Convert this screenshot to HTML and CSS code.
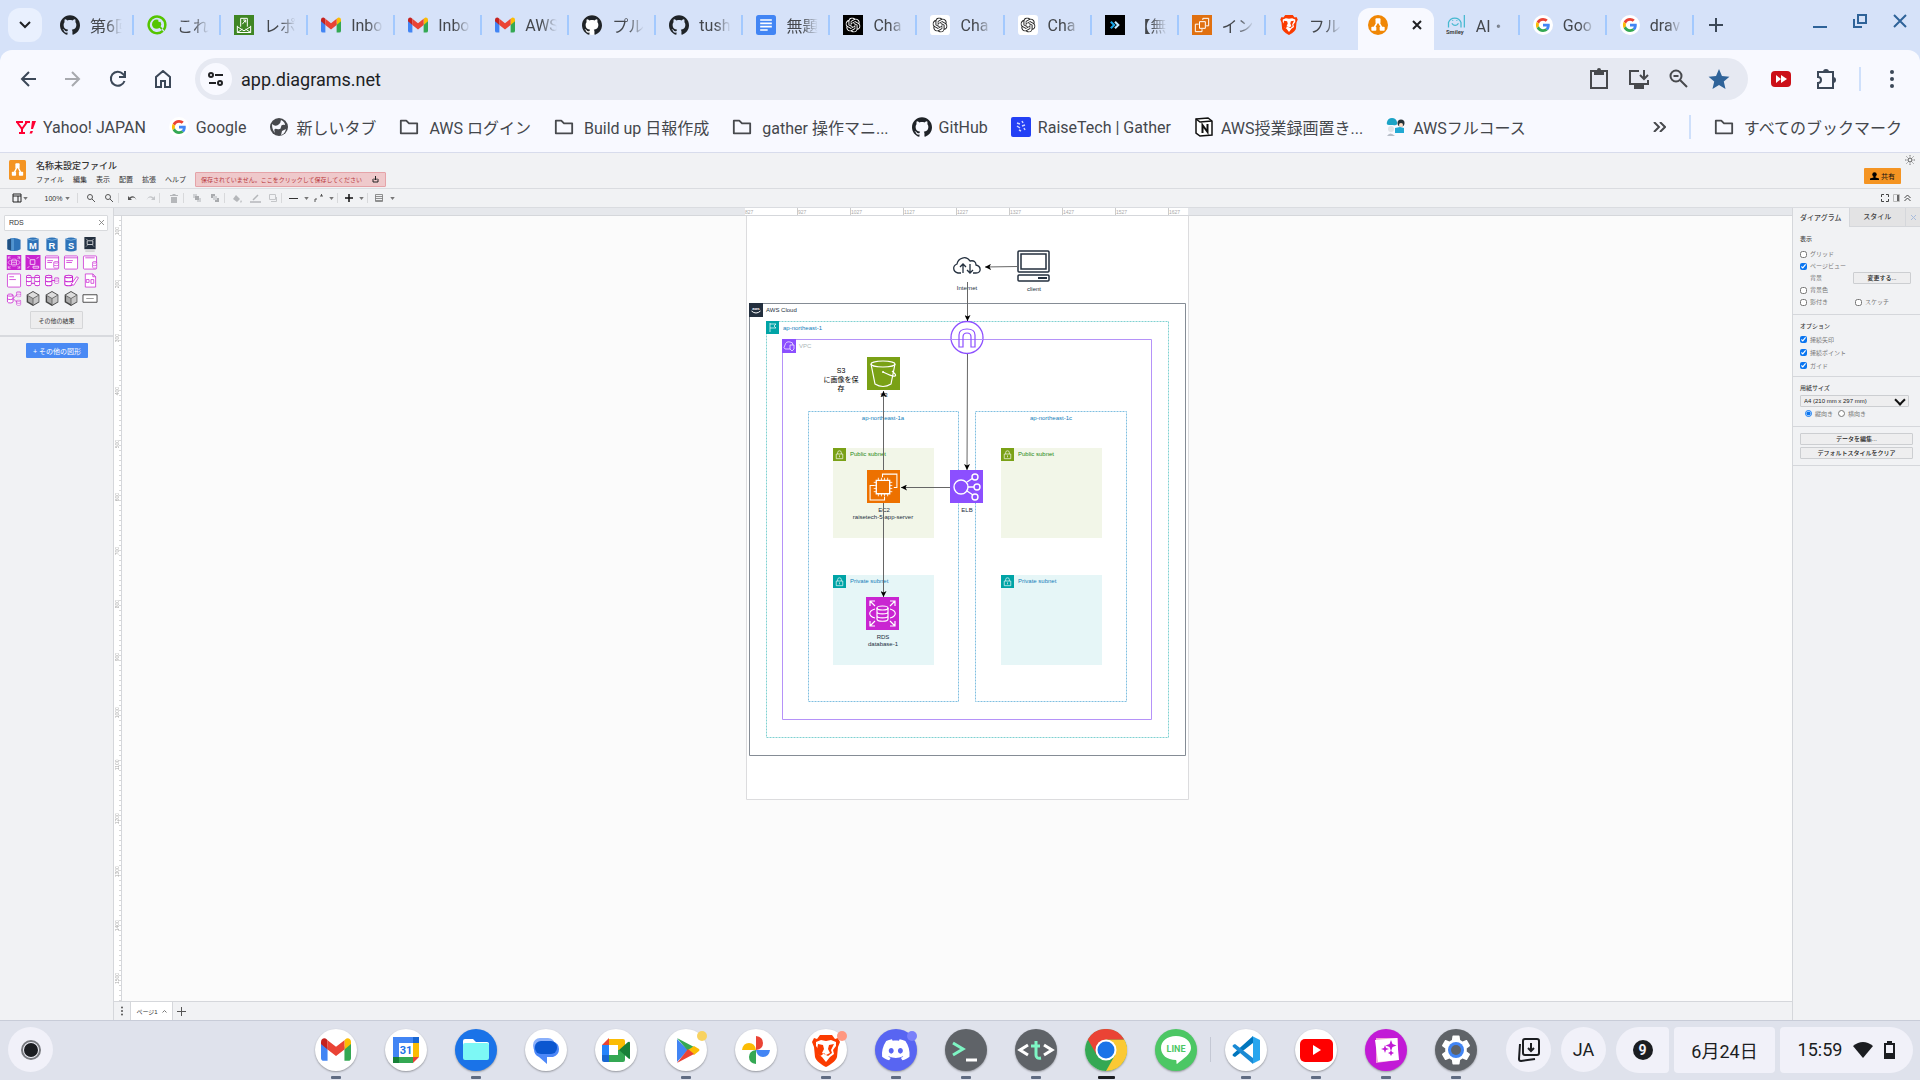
FILE: index.html
```html
<!DOCTYPE html>
<html lang="ja">
<head>
<meta charset="utf-8">
<meta name="viewport" content="width=device-width, initial-scale=1">
<title>名称未設定ファイル</title>
<link rel="stylesheet" href="styles.css">
</head>
<body>
<svg class="defs" aria-hidden="true">
  <symbol id="github" viewBox="0 0 24 24"><path d="M12 .297c-6.63 0-12 5.373-12 12 0 5.303 3.438 9.8 8.205 11.385.6.113.82-.258.82-.577 0-.285-.01-1.04-.015-2.04-3.338.724-4.042-1.61-4.042-1.61C4.422 18.07 3.633 17.7 3.633 17.7c-1.087-.744.084-.729.084-.729 1.205.084 1.838 1.236 1.838 1.236 1.07 1.835 2.809 1.305 3.495.998.108-.776.417-1.305.76-1.605-2.665-.3-5.466-1.332-5.466-5.93 0-1.31.465-2.38 1.235-3.22-.135-.303-.54-1.523.105-3.176 0 0 1.005-.322 3.3 1.23.96-.267 1.98-.399 3-.405 1.02.006 2.04.138 3 .405 2.28-1.552 3.285-1.23 3.285-1.23.645 1.653.24 2.873.12 3.176.765.84 1.23 1.91 1.23 3.22 0 4.61-2.805 5.625-5.475 5.92.42.36.81 1.096.81 2.22 0 1.606-.015 2.896-.015 3.286 0 .315.21.69.825.57C20.565 22.092 24 17.592 24 12.297c0-6.627-5.373-12-12-12" fill="#1f2328"/></symbol>
  <symbol id="github-white" viewBox="0 0 24 24"><circle cx="12" cy="12" r="12" fill="#fff"/><use href="#github"/></symbol>
  <symbol id="google" viewBox="-10 -10 68 68"><circle cx="24" cy="24" r="34" fill="#fff"/><path fill="#ea4335" d="M24 9.5c3.54 0 6.71 1.22 9.21 3.6l6.85-6.85C35.9 2.38 30.47 0 24 0 14.62 0 6.51 5.38 2.56 13.22l7.98 6.19C12.43 13.72 17.74 9.5 24 9.5z"/><path fill="#4285f4" d="M46.98 24.55c0-1.57-.15-3.09-.38-4.55H24v9.02h12.94c-.58 2.96-2.26 5.48-4.78 7.18l7.73 6c4.51-4.18 7.09-10.36 7.09-17.65z"/><path fill="#fbbc05" d="M10.53 28.59c-.48-1.45-.76-2.99-.76-4.59s.27-3.14.76-4.59l-7.98-6.19C.92 16.46 0 20.12 0 24c0 3.88.92 7.54 2.56 10.78l7.97-6.19z"/><path fill="#34a853" d="M24 48c6.48 0 11.93-2.13 15.89-5.81l-7.73-6c-2.15 1.45-4.92 2.3-8.16 2.3-6.26 0-11.57-4.22-13.47-9.91l-7.98 6.19C6.51 42.62 14.62 48 24 48z"/></symbol>
  <symbol id="gmail" viewBox="0 0 32 24"><path d="M0 4v17q0 3 3 3h4V9z" fill="#4285f4"/><path d="M32 4v17q0 3-3 3h-4V9z" fill="#34a853"/><path d="M25 2v10l7-6V4c0-4-4-5-6-3z" fill="#fbbc04"/><path d="M7 2v10L0 6V4c0-4 4-5 6-3z" fill="#c5221f"/><path d="m7 2 9 7 9-7v10l-9 7-9-7z" fill="#ea4335"/></symbol>
  <symbol id="qiita" viewBox="0 0 24 24"><path d="M19 19A10 10 0 1 1 22 12q0 4-2 6" fill="none" stroke="#55c500" stroke-width="3"/><circle cx="11.500" cy="11" r="5.500" fill="#55c500"/><circle cx="15" cy="7" r="1.500" fill="#d6e2f9"/><path d="m15 14 3 3" stroke="#55c500" stroke-width="2"/></symbol>
  <symbol id="ses" viewBox="0 0 24 24"><path fill="#3f8624" d="M0 0h24v24H0z"/><path d="M4 13v8h16v-8M4 14l8 5 8-5M4 21l6-4m10 4-6-4M8 14V4h8v10M10 11l4-5m-3 0h3v3" fill="none" stroke="#fff" stroke-width="1.200"/></symbol>
  <symbol id="docs" viewBox="0 0 24 24"><rect width="24" height="24" rx="3" fill="#4285f4"/><path d="M5 6h14M5 10h14M5 14h14M5 18h9" stroke="#fff" stroke-width="2"/></symbol>
  <symbol id="knot" viewBox="0 0 24 24"><path fill="currentColor" d="M22.2819 9.8211a5.9847 5.9847 0 0 0-.5157-4.9108 6.0462 6.0462 0 0 0-6.5098-2.9A6.0651 6.0651 0 0 0 4.9807 4.1818a5.9847 5.9847 0 0 0-3.9977 2.9 6.0462 6.0462 0 0 0 .7427 7.0966 5.98 5.98 0 0 0 .511 4.9107 6.051 6.051 0 0 0 6.5146 2.9001A5.9847 5.9847 0 0 0 13.2599 24a6.0557 6.0557 0 0 0 5.7718-4.2058 5.9894 5.9894 0 0 0 3.9977-2.9001 6.0557 6.0557 0 0 0-.7475-7.0729zm-9.022 12.6081a4.4755 4.4755 0 0 1-2.8764-1.0408l.1419-.0804 4.7783-2.7582a.7948.7948 0 0 0 .3927-.6813v-6.7369l2.02 1.1686a.071.071 0 0 1 .038.052v5.5826a4.504 4.504 0 0 1-4.4945 4.4944zm-9.6607-4.1254a4.4708 4.4708 0 0 1-.5346-3.0137l.142.0852 4.783 2.7582a.7712.7712 0 0 0 .7806 0l5.8428-3.3685v2.3324a.0804.0804 0 0 1-.0332.0615L9.74 19.9502a4.4992 4.4992 0 0 1-6.1408-1.6464zM2.3408 7.8956a4.485 4.485 0 0 1 2.3655-1.9728V11.6a.7664.7664 0 0 0 .3879.6765l5.8144 3.3543-2.0201 1.1685a.0757.0757 0 0 1-.071 0l-4.8303-2.7865A4.504 4.504 0 0 1 2.3408 7.872zm16.5963 3.8558L13.1038 8.364 15.1192 7.2a.0757.0757 0 0 1 .071 0l4.8303 2.7913a4.4944 4.4944 0 0 1-.6765 8.1042v-5.6772a.79.79 0 0 0-.407-.667zm2.0107-3.0231l-.142-.0852-4.7735-2.7818a.7759.7759 0 0 0-.7854 0L9.409 9.2297V6.8974a.0662.0662 0 0 1 .0284-.0615l4.8303-2.7866a4.4992 4.4992 0 0 1 6.6802 4.66zM8.3065 12.863l-2.02-1.1638a.0804.0804 0 0 1-.038-.0567V6.0742a4.4992 4.4992 0 0 1 7.3757-3.4537l-.142.0805L8.704 5.459a.7948.7948 0 0 0-.3927.6813zm1.0976-2.3654l2.602-1.4998 2.6069 1.4998v2.9994l-2.5974 1.4997-2.6067-1.4997Z"/></symbol>
  <symbol id="chat-dark" viewBox="0 0 24 24"><path d="M0 0h24v24H0z"/><use href="#knot" x="3" y="3" width="18" height="18" color="#fff"/></symbol>
  <symbol id="chat-light" viewBox="0 0 24 24"><rect width="24" height="24" rx="4" fill="#fff"/><use href="#knot" x="3" y="3" width="18" height="18" color="#222"/></symbol>
  <symbol id="chevrons" viewBox="0 0 24 24"><path d="M0 0h24v24H0z"/><path d="m7 8 4 4-4 4" stroke="#18a7e8" stroke-width="2.500" fill="none"/><path d="m12 8 4 4-4 4" stroke="#bfe9ff" stroke-width="2.500" fill="none"/></symbol>
  <symbol id="ec2" viewBox="0 0 32 32"><path fill="#ed7100" d="M0 0h32v32H0z"/><g fill="none" stroke="#fff"><path d="M9 10h13v13H9z" stroke-width="1.300"/><path d="M11 7.500V10m3-2.500V10m3-2.500V10m3-2.500V10M11 23v2.500m3-2.500v2.500m3-2.500v2.500m3-2.500v2.500M6.500 12H9m-2.500 3H9m-2.500 3H9m-2.500 3H9M22 12h2.500M22 15h2.500M22 18h2.500M22 21h2.500" stroke-width=".800"/><path d="M15 7V4h14v13h-3M7 15H3v14h14v-3"/></g></symbol>
  <symbol id="ec2-tab" viewBox="0 0 24 24"><path fill="#e07010" d="M0 0h24v24H0z"/><path d="M9 8h7v8H9zM13 6V4h7v9h-3M8 11H4v9h8v-3" fill="none" stroke="#fff" stroke-width="1.200"/></symbol>
  <symbol id="brave" viewBox="0 0 28 32"><path d="m8 0-3 4-3-1-2 4 2 5 1 10c1 4 7 8 11 10 4-2 10-6 11-10l1-10 2-5-2-4-3 1-3-4z" fill="#fb3b00"/><path d="m4 7 5-2 5 1 5-1 5 2v4l-3 4 1 4-4 3-4 5-4-5-4-3 1-4-3-4z" fill="#fff"/><path d="m6 9 5 1 1 4-2 4 4 2 4-2-2-4 1-4 5-1-3 6 1 3-4 3-2-1-2-2-2 2-2 1-4-3 1-3z" fill="#fb3b00"/><path d="m13 10h2l1 5-1 3h-2l-1-3z" fill="#fff"/></symbol>
  <symbol id="drawio" viewBox="0 0 24 24"><path d="m12 7-5 9m5-9 5 9" stroke="#fff" stroke-width="2"/><rect x="9" y="4" width="6" height="6" rx="1" fill="#fff"/><rect x="4" y="14" width="6" height="5" rx="1" fill="#fff"/><rect x="14" y="14" width="6" height="5" rx="1" fill="#fff"/></symbol>
  <symbol id="drawio-round" viewBox="0 0 24 24"><circle cx="12" cy="12" r="12" fill="#f08705"/><use href="#drawio"/></symbol>
  <symbol id="folder" viewBox="0 0 22 18"><path d="M2 2h6l3 3h9v11H2z" fill="none" stroke="#47494d" stroke-width="2" stroke-linejoin="round"/></symbol>
  <symbol id="caret" viewBox="0 0 6 4"><path d="M0 0h6L3 4z" fill="#777"/></symbol>
  <symbol id="lock" viewBox="0 0 14 14"><path d="M3.500 6.500h7v5h-7zM5 6.500V5a2 2 0 0 1 4 0v1.500M7 8v2" fill="none" stroke="#fff" stroke-width=".700"/></symbol>
  <symbol id="rds" viewBox="0 0 33 33"><path fill="#c925d1" d="M0 0h33v33H0z"/><g fill="none" stroke="#fff" stroke-width="1.200"><ellipse cx="16.500" cy="11" rx="5.500" ry="2"/><path d="M11 11v11c0 3 11 3 11 0V11M11 15c0 2.500 11 2.500 11 0m-11 4c0 2.500 11 2.500 11 0M9 12c-7 2-7 7 0 9m15-9c7 2 7 7 0 9M9 9 4 4m0 5V4h5m15 5 5-5m-5 0h5v5M9 24l-5 5m0-5v5h5m15-5 5 5m-5 0h5v-5"/></g></symbol>
  <symbol id="cube" viewBox="0 0 16 16"><path d="m8 1 6 3.500v7L8 15l-6-3.500v-7z" fill="#a9a9a9" stroke="#444" stroke-width="1.500"/><path d="m8 1 6 3.500L8 8 2 4.500z" fill="#ddd"/><path d="M8 8v7l6-3.500v-7z" fill="#c6c6c6"/><path d="m2 4.500 6 3.500 6-3.500M8 8v7" fill="none" stroke="#555" stroke-width=".800"/></symbol>
  <symbol id="bucket-db" viewBox="0 0 16 16"><path d="M2 2q6-3 12 0v12q-6 3-12 0z" fill="#2e73b8"/><path d="M2 2q6 3 12 0" stroke="#7db0dd" fill="none"/></symbol>
  <symbol id="cyl" viewBox="0 0 8 10" preserveAspectRatio="none"><path d="M1 2c0-1.300 6-1.300 6 0v6c0 1.300-6 1.300-6 0zm0 0c0 1.300 6 1.300 6 0M1 5c0 1.300 6 1.300 6 0" fill="#fff" stroke="#c925d1" stroke-width=".800"/></symbol>
</svg>

<header class="browser">
  <div class="tabstrip">
    <button class="tab-search" aria-label="タブを検索"><svg width="12" height="8" viewBox="0 0 12 8"><path d="m1 1 5 5 5-5" fill="none" stroke="#202124" stroke-width="2"/></svg></button>
    <nav class="tabs">
      <a class="tab" href="#"><svg><use href="#github"/></svg><span>第6回</span></a>
      <a class="tab" href="#"><svg><use href="#qiita"/></svg><span>これ</span></a>
      <a class="tab" href="#"><svg><use href="#ses"/></svg><span>レポ</span></a>
      <a class="tab" href="#"><svg><use href="#gmail"/></svg><span>Inbo</span></a>
      <a class="tab" href="#"><svg><use href="#gmail"/></svg><span>Inbo</span></a>
      <a class="tab" href="#"><svg><use href="#gmail"/></svg><span>AWS</span></a>
      <a class="tab" href="#"><svg><use href="#github-white"/></svg><span>プル</span></a>
      <a class="tab" href="#"><svg><use href="#github"/></svg><span>tush</span></a>
      <a class="tab" href="#"><svg><use href="#docs"/></svg><span>無題</span></a>
      <a class="tab" href="#"><svg><use href="#chat-dark"/></svg><span>Cha</span></a>
      <a class="tab" href="#"><svg><use href="#chat-light"/></svg><span>Cha</span></a>
      <a class="tab" href="#"><svg><use href="#chat-light"/></svg><span>Cha</span></a>
      <a class="tab" href="#"><svg><use href="#chevrons"/></svg><span>【無</span></a>
      <a class="tab" href="#"><svg><use href="#ec2-tab"/></svg><span>イン</span></a>
      <a class="tab plain" href="#"><svg><use href="#brave"/></svg><span>フル</span></a>
      <a class="tab active" href="#" aria-label="draw.io"><svg><use href="#drawio-round"/></svg><svg class="tab-close" viewBox="0 0 10 10"><path d="m1 1 8 8m0-8-8 8" stroke="#202124" stroke-width="2"/></svg></a>
      <a class="tab" href="#"><svg viewBox="0 0 24 24"><path d="M3 15V9a8 8 0 0 1 15 0v6m4-15v15M7 10q4 5 8 0M8 6v1m5-1v1" fill="none" stroke="#45b8d0" stroke-width="1.500"/><text x="0" y="23" font-size="7" font-weight="bold" fill="#444">Smiley</text></svg><span>AI・</span></a>
      <a class="tab" href="#"><svg><use href="#google"/></svg><span>Goo</span></a>
      <a class="tab" href="#"><svg><use href="#google"/></svg><span>drav</span></a>
    </nav>
    <button class="icon-btn new-tab" aria-label="新しいタブ"><svg width="14" height="14" viewBox="0 0 14 14"><path d="M7 0v14M0 7h14" stroke="#3c4858" stroke-width="2"/></svg></button>
    <div class="window-controls">
      <button class="icon-btn" aria-label="最小化"><svg width="14" height="14" viewBox="0 0 14 14"><path d="M0 13h14" stroke="#2f6399" stroke-width="2"/></svg></button>
      <button class="icon-btn" aria-label="元に戻す"><svg width="14" height="14" viewBox="0 0 14 14"><path d="M5 1h8v8H5zM1 5v8h8" fill="none" stroke="#2f6399" stroke-width="2"/></svg></button>
      <button class="icon-btn" aria-label="閉じる"><svg width="14" height="14" viewBox="0 0 14 14"><path d="m1 1 12 12m0-12L1 13" stroke="#2f6399" stroke-width="2"/></svg></button>
    </div>
  </div>

  <div class="navbar">
    <div class="nav-buttons">
      <button class="icon-btn" aria-label="戻る"><svg width="16" height="16" viewBox="0 0 16 16"><path d="M16 8H2m7-7L2 8l7 7" fill="none" stroke="#3c4858" stroke-width="2"/></svg></button>
      <button class="icon-btn" aria-label="進む"><svg width="16" height="16" viewBox="0 0 16 16"><path d="M0 8h14M7 1l7 7-7 7" fill="none" stroke="#a7a9ae" stroke-width="2"/></svg></button>
      <button class="icon-btn" aria-label="再読み込み"><svg width="18" height="18" viewBox="0 0 18 18"><path d="M15.500 11A7 7 0 1 1 14 4l2 2M16 1v6h-6" fill="none" stroke="#3c4858" stroke-width="2"/></svg></button>
      <button class="icon-btn" aria-label="ホーム"><svg width="16" height="18" viewBox="0 0 16 18"><path d="M1 7v10h5v-6h4v6h5V7L8 1z" fill="none" stroke="#3c4858" stroke-width="2"/></svg></button>
    </div>
    <div class="omnibox">
      <button class="site-info" aria-label="サイト情報"><svg width="16" height="14" viewBox="0 0 16 14" fill="none" stroke="#202124" stroke-width="2"><circle cx="3" cy="3" r="2"/><path d="M7 3h8M1 11h7"/><circle cx="12" cy="11" r="2"/></svg></button>
      <input class="url" type="text" value="app.diagrams.net" aria-label="アドレス">
      <button class="icon-btn" aria-label="クリップボード"><svg width="20" height="22" viewBox="0 0 20 22"><path d="M2 3h16v17H2z" fill="none" stroke="#47494d" stroke-width="2"/><path d="M5 2h3a2 2 0 0 1 4 0h3v5H5z" fill="#47494d"/></svg></button>
      <button class="icon-btn" aria-label="インストール"><svg width="22" height="20" viewBox="0 0 22 20"><path d="M11 2H2v13h18v-4M16 1v9m-4-4 4 4 4-4" fill="none" stroke="#47494d" stroke-width="2"/><path d="M6 16h10v4H6z" fill="#47494d"/></svg></button>
      <button class="icon-btn" aria-label="ズーム"><svg width="20" height="20" viewBox="0 0 20 20" fill="none" stroke="#47494d" stroke-width="2"><circle cx="7" cy="7" r="5.500"/><path d="m11 11 7 7M4.500 7h5"/></svg></button>
      <button class="icon-btn" aria-label="ブックマーク"><svg width="22" height="20" viewBox="0 0 24 23"><path d="m12 0 3.400 8 8.600.8-6.500 5.700 2 8.500-7.500-4.600L4.500 23l2-8.500L0 8.800 8.600 8z" fill="#2f6399"/></svg></button>
    </div>
    <div class="extensions">
      <button class="icon-btn" aria-label="早送り"><svg width="20" height="16" viewBox="0 0 20 16"><rect width="20" height="16" rx="4" fill="#cc1018"/><path d="m5 4 5 4-5 4zm5 0 6 4-6 4z" fill="#fff"/></svg></button>
      <button class="icon-btn" aria-label="拡張機能"><svg width="22" height="22" viewBox="0 0 22 22"><path d="M2 4h15v16H2v-5a3 3 0 0 0 0-6z" fill="none" stroke="#3c4858" stroke-width="2"/><path d="M7 4a3 3 0 0 1 6 0zM17 9a3 3 0 0 1 0 6z" fill="#3c4858"/></svg></button>
      <i class="sep"></i>
      <button class="icon-btn" aria-label="メニュー"><svg width="4" height="18" viewBox="0 0 4 18" fill="#3c4858"><circle cx="2" cy="2" r="2"/><circle cx="2" cy="9" r="2"/><circle cx="2" cy="16" r="2"/></svg></button>
    </div>
  </div>

  <nav class="bookmarks">
    <a href="#"><svg viewBox="0 0 20 20"><path d="M0 5h7M1 5l5 7v4m0-4 5-7M3 16h6M9 5h5" stroke="#f03" stroke-width="2" fill="none"/><path d="m16 4 4 0-3 8h-2zM14.500 14h2.500l-1 2.500h-2.500z" fill="#f03"/></svg>Yahoo! JAPAN</a>
    <a href="#"><svg><use href="#google"/></svg>Google</a>
    <a href="#"><svg viewBox="0 0 20 20"><circle cx="10" cy="10" r="9" fill="#47494d"/><path d="M3 7q3 3 6 1t3-5q4 2 4 5-4-1-4 2t-4 2-2 4q-3-3-3-9zM12 18l1-4 4-2q-1 5-5 6z" fill="#f8f9ff"/></svg>新しいタブ</a>
    <a class="dir" href="#"><svg><use href="#folder"/></svg>AWS ログイン</a>
    <a class="dir" href="#"><svg><use href="#folder"/></svg>Build up 日報作成</a>
    <a class="dir" href="#"><svg><use href="#folder"/></svg>gather 操作マニ...</a>
    <a href="#"><svg><use href="#github"/></svg>GitHub</a>
    <a href="#"><svg viewBox="0 0 20 20"><rect width="20" height="20" rx="2" fill="#2340f5"/><path d="m6 6 3 1m2-3 1 2M6 9l3 2m5-3-3 1m-3 4 2 1m3-3 1 2" stroke="#cfd6ff" stroke-width="1.500"/></svg>RaiseTech | Gather</a>
    <a href="#"><svg viewBox="0 0 20 20"><path d="m2 2 12-1 4 3v14L6 19l-4-3z" fill="#fff" stroke="#111" stroke-width="1.500"/><path d="m2 2 4 3 12-1" stroke="#111" fill="none" stroke-width="1.500"/><path d="M8.500 16V8l5 7V7" stroke="#111" stroke-width="2" fill="none"/></svg>AWS授業録画置き...</a>
    <a href="#"><svg viewBox="0 0 20 20"><path d="M1 5q1-4 5-4t5 4q1 4-4 3H3Q0 8 1 5z" fill="#1ba3c6"/><circle cx="15" cy="6" r="3.500" fill="#263238"/><circle cx="15" cy="8" r="2" fill="#ffe0c9"/><path d="M9 16v-5l5-1 4 1v5z" fill="#21a9d3"/><circle cx="5" cy="12" r="3" fill="#dfe3e8"/><path d="M1 19q3-5 8 0z" fill="#b8bec8"/></svg>AWSフルコース</a>
    <span class="spacer"></span>
    <button class="icon-btn" aria-label="その他のブックマーク"><svg width="13" height="10" viewBox="0 0 13 10"><path d="m1 0 5 5-5 5m6-10 5 5-5 5" fill="none" stroke="#47494d" stroke-width="2"/></svg></button>
    <i class="sep"></i>
    <a class="dir" href="#"><svg><use href="#folder"/></svg>すべてのブックマーク</a>
  </nav>
</header>

<main class="app">
  <div class="app-header">
    <svg class="logo" viewBox="0 0 24 24" preserveAspectRatio="none"><rect width="24" height="24" rx="2" fill="#f49422"/><use href="#drawio"/></svg>
    <div class="titles">
      <h1>名称未設定ファイル</h1>
      <div class="menus">
        <a href="#">ファイル</a><a href="#">編集</a><a href="#">表示</a><a href="#">配置</a><a href="#">拡張</a><a href="#">ヘルプ</a>
        <button class="unsaved">保存されていません。ここをクリックして保存してください<svg width="7" height="8" viewBox="0 0 7 8"><path d="M1 4v3h5V4M3.500 1v4M2 3.500 3.500 5 5 3.500" fill="none" stroke="#222"/></svg></button>
      </div>
    </div>
    <div class="header-right">
      <svg width="10" height="10" viewBox="0 0 10 10" fill="none" stroke="#555"><circle cx="5" cy="5" r="2"/><path d="M5 0v1.500M5 8.500V10M0 5h1.500M8.500 5H10M1.500 1.500l1 1m5 5 1 1m0-7-1 1m-5 5-1 1" stroke-width=".800"/></svg>
      <button class="share"><svg width="9" height="8" viewBox="0 0 9 8"><circle cx="4.500" cy="2.500" r="2.200"/><path d="M3.500 4h2v1.500L9 6.500V8H0V6.500l3.500-1z"/></svg>共有</button>
    </div>
  </div>

  <div class="toolbar">
    <span class="tool-group first"><svg width="10" height="10" viewBox="0 0 10 10"><path d="M1 1h8v8H1zM1 3h8M6 3v6" fill="none" stroke="#222"/></svg><svg class="caret"><use href="#caret"/></svg></span>
    <span class="tool-group zoom-level">100%<svg class="caret"><use href="#caret"/></svg></span>
    <span class="tool-group"><svg width="8" height="8" viewBox="0 0 8 8" fill="none" stroke="#555"><circle cx="3" cy="3" r="2.500"/><path d="m5 5 3 3"/></svg><svg width="8" height="8" viewBox="0 0 8 8" fill="none" stroke="#555"><circle cx="3" cy="3" r="2.500"/><path d="m5 5 3 3"/></svg></span>
    <span class="tool-group"><svg width="9" height="7" viewBox="0 0 9 7"><path d="M0 1v4h4L2.500 3.500Q6 1 8.500 5 6-1 1.500 2.500z" fill="#555"/></svg><svg width="9" height="7" viewBox="0 0 9 7"><path d="M9 1v4H5l1.500-1.500Q3 1 .5 5 3-1 7.500 2.500z" fill="#c4c6c9"/></svg></span>
    <span class="tool-group single"><svg width="8" height="9" viewBox="0 0 8 9"><path d="M0 1h2.500V0h3v1H8v1H0zM1 3h6v6H1z" fill="#b5b7ba"/></svg></span>
    <span class="tool-group"><svg width="8" height="8" viewBox="0 0 8 8"><path d="M0 0h4v4H0zM5 4h3v4H4V5z" fill="#d0d2d5"/><path d="M2 2h4v4H2z" fill="#a9abae"/></svg><svg width="8" height="8" viewBox="0 0 8 8"><path d="M2 2h4v4H2z" fill="#d0d2d5"/><path d="M0 0h4v2H2v2H0zM6 4h2v4H4V6h2z" fill="#a9abae"/></svg></span>
    <span class="tool-group triple"><svg width="9" height="9" viewBox="0 0 9 9"><path d="m3 1 4 4-3 3-4-3zM8 6q1.500 2 0 2.500T8 6z" fill="#b5b7ba"/></svg><svg width="11" height="10" viewBox="0 0 11 10"><path d="m3 7 5-5M0 9h11" stroke="#b5b7ba" stroke-width="1.500"/></svg><svg width="8" height="8" viewBox="0 0 8 8"><path d="M.5.5h6v5h-6zM2 7.500h5.500V3" fill="none" stroke="#c4c6c9"/></svg></span>
    <span class="tool-group quad"><svg width="9" height="5" viewBox="0 0 9 5"><path d="M0 2.500h9" stroke="#333"/></svg><svg class="caret"><use href="#caret"/></svg><svg width="9" height="8" viewBox="0 0 9 8"><path d="M1 8V5h2M6 2h3M7.500 0v2" stroke="#555" fill="none"/></svg><svg class="caret"><use href="#caret"/></svg></span>
    <span class="tool-group pair"><svg width="8" height="8" viewBox="0 0 8 8"><path d="M4 0v8M0 4h8" stroke="#111" stroke-width="1.500"/></svg><svg class="caret"><use href="#caret"/></svg></span>
    <span class="tool-group last"><svg width="8" height="8" viewBox="0 0 8 8"><path d="M.5.5h7v7h-7zm0 2h7m-7 2h7m-7 2h7" fill="none" stroke="#777" stroke-width=".800"/></svg><svg class="caret"><use href="#caret"/></svg></span>
    <span class="spacer"></span>
    <svg width="8" height="8" viewBox="0 0 8 8"><path d="M.5 3V.5H3M5 .5h2.500V3m0 2v2.500H5m-2 0H.5V5" fill="none" stroke="#444"/></svg>
    <svg width="7" height="8" viewBox="0 0 7 8"><path d="M.5.5h6v7h-6z" fill="none" stroke="#bbb"/><path d="M4 1h2v6H4z" fill="#666"/></svg>
    <svg width="7" height="8" viewBox="0 0 7 8"><path d="m.5 4 3-3 3 3m-6 3 3-3 3 3" fill="none" stroke="#444"/></svg>
  </div>

  <div class="workspace">
    <aside class="shapes">
      <div class="search"><input type="text" value="RDS" aria-label="図形を検索"><button aria-label="クリア"><svg width="5" height="5" viewBox="0 0 5 5"><path d="m0 0 5 5m0-5L0 5" stroke="#777" stroke-width=".800"/></svg></button></div>
      <div class="palette">
        <svg viewBox="0 0 16 16"><path d="M1 3q7-4 14 0v10q-7 4-14 0z" fill="#2e73b8"/><path d="M1 3 5 1.500v13L1 13z" fill="#205081"/><path d="M5 1.500h3v13H5z" fill="#5294cf"/></svg>
        <svg viewBox="0 0 16 16"><use href="#bucket-db"/><text class="letter" x="8" y="13">M</text></svg>
        <svg viewBox="0 0 16 16"><use href="#bucket-db"/><text class="letter" x="8" y="13">R</text></svg>
        <svg viewBox="0 0 16 16"><use href="#bucket-db"/><text class="letter" x="8" y="13">S</text></svg>
        <svg viewBox="0 0 16 16"><path d="M2 0h12v13H2z" fill="#232f3e"/><path d="M5 4h6v4H5zM4 2l1 1m7-1-1 1M4 10l1-1m7 1-1-1" stroke="#fff" fill="none" stroke-width=".800"/><path d="M3 15h10" stroke="#bbb"/></svg>
        <svg viewBox="0 0 16 16"><use href="#rds"/></svg>
        <svg viewBox="0 0 16 16"><path fill="#c925d1" d="M0 0h16v16H0z"/><path d="M2 2l2 2m10-2-2 2M2 14l2-2M5 5h5v5H5zm3 7h6v2H8z" fill="none" stroke="#fff" stroke-width=".800"/></svg>
        <svg viewBox="0 0 16 16"><rect x="1" y="1" width="14" height="14" rx="1" fill="#fff" stroke="#c925d1" stroke-width=".800"/><path d="M1 3h14M3 6h6M3 8h5" stroke="#c925d1" stroke-width=".800"/><use href="#cyl" x="9" y="6" width="7" height="9"/></svg>
        <svg viewBox="0 0 16 16"><rect x="1" y="1" width="14" height="14" rx="1" fill="#fff" stroke="#c925d1" stroke-width=".800"/><path d="M1 3h14M3 6h7M3 8h6" stroke="#c925d1" stroke-width=".800"/></svg>
        <svg viewBox="0 0 16 16"><rect x="1" y="1" width="14" height="14" rx="1" fill="#fff" stroke="#c925d1" stroke-width=".800"/><path d="M3 3h10" stroke="#c925d1" stroke-width=".800"/><use href="#cyl" x="10" y="6" width="6" height="9"/></svg>
        <svg viewBox="0 0 16 16"><rect x="1" y="1" width="14" height="14" rx="1" fill="#fff" stroke="#c925d1" stroke-width=".800"/><path d="M3 4h5M3 7h7" stroke="#c925d1" stroke-width=".800"/></svg>
        <svg viewBox="0 0 16 16"><use href="#cyl" x="0" y="1" width="7" height="14"/><use href="#cyl" x="9" y="1" width="7" height="14"/><path d="M6 5h4m-4 6h4" stroke="#c925d1"/></svg>
        <svg viewBox="0 0 16 16"><use href="#cyl" x="0" y="1" width="9" height="14"/><use href="#cyl" x="10" y="4" width="6" height="8"/><path d="M8 8h3" stroke="#c925d1"/></svg>
        <svg viewBox="0 0 16 16"><use href="#cyl" x="0" y="1" width="11" height="14"/><path d="m8 12 6-8 2 1-5 8z" fill="#fff" stroke="#c925d1" stroke-width=".800"/></svg>
        <svg viewBox="0 0 16 16"><path d="M3 1h8l3 3v11H3zM11 1v3h3M4 7h3v3H4zm5 0h3v4H9z" fill="#fff" stroke="#c925d1" stroke-width=".800"/></svg>
        <svg viewBox="0 0 16 16"><use href="#cyl" x="0" y="2" width="8" height="12"/><use href="#cyl" x="10" y="0" width="6" height="7"/><use href="#cyl" x="10" y="9" width="6" height="7"/><path d="m7 8 4-4M7 8l4 4" stroke="#c925d1" stroke-width=".800"/></svg>
        <svg><use href="#cube"/></svg>
        <svg><use href="#cube"/></svg>
        <svg><use href="#cube"/></svg>
        <svg viewBox="0 0 16 16"><path d="M.5 4h15v8H.5z" fill="#fff" stroke="#444"/><path d="M4 8h8" stroke="#999"/></svg>
      </div>
      <button class="more-results">その他の結果</button>
      <hr>
      <button class="more-shapes"><b>+</b> その他の図形</button>
    </aside>

    <section class="stage">
      <div class="ruler-top"><div class="ruler-page"><span>827</span><span>927</span><span>1027</span><span>1127</span><span>1227</span><span>1327</span><span>1427</span><span>1527</span><span>1627</span></div></div>
      <div class="stage-body">
        <div class="ruler-left"><span>100</span><span>200</span><span>300</span><span>400</span><span>500</span><span>600</span><span>700</span><span>800</span><span>900</span><span>1000</span><span>1100</span><span>1200</span><span>1300</span><span>1400</span><span>1500</span></div>
        <div class="canvas">
          <svg class="diagram" width="443" height="584" viewBox="746 216 443 584">
            <defs><marker id="arrow" viewBox="0 0 6 6" refX="6" refY="3" markerWidth="6" markerHeight="6" orient="auto" markerUnits="userSpaceOnUse"><path d="M0 0l6 3-6 3 1.500-3z"/></marker></defs>
            <path d="M746.500 216v583.500h442V216" fill="#fff" stroke="#dcdcde"/>
            <path d="M749.500 303.500h436v452h-436z" fill="none" stroke="#858c95"/>
            <path d="M766.500 321.500h402v416h-402z" fill="none" stroke="#7fd1d1" stroke-dasharray="2 1"/>
            <path d="M782.500 339.500h369v380h-369z" fill="none" stroke="#b592f8"/>
            <path d="M808.500 411.500h150v290h-150zM975.500 411.500h151v290h-151z" fill="none" stroke="#7fbfe0" stroke-dasharray="2 1"/>
            <path d="M833 448h101v90H833zM1001 448h101v90h-101z" fill="#f2f6e8"/>
            <path d="M833 575h101v90H833zM1001 575h101v90h-101z" fill="#e6f6f7"/>
            <path d="M833 448h13v13h-13zM1001 448h13v13h-13z" fill="#7aa116"/>
            <path d="M833 575h13v13h-13zM1001 575h13v13h-13z" fill="#00a4a6"/>
            <use href="#lock" x="833" y="448" width="13" height="13"/><use href="#lock" x="1001" y="448" width="13" height="13"/><use href="#lock" x="833" y="575" width="13" height="13"/><use href="#lock" x="1001" y="575" width="13" height="13"/>
            <path d="M749 303h14v14h-14z" fill="#232f3e"/><path d="M751.500 311q4.500 4 9 0" fill="none" stroke="#fff"/><text x="756" y="310" class="logo-word mid">aws</text>
            <path d="M766 321h13v13h-13z" fill="#00a4a6"/><path d="M770 332v-9m0 1h6l-2 2 2 2h-6" fill="none" stroke="#fff" stroke-width=".700"/>
            <path d="M782 339h14v14h-14z" fill="#8c4fff"/><path d="M790 349h-5q-2-1 0-4 1-4 5-3 3 0 3 3m-3 0h4v4l-2 2-2-2z" fill="none" stroke="#fff" stroke-width=".700"/>
            <g class="label">
              <text x="766" y="312" fill="#232f3e">AWS Cloud</text>
              <text x="783" y="330" fill="#147eba">ap-northeast-1</text>
              <text x="799" y="348" fill="#aab7b8">VPC</text>
              <text x="850" y="456" fill="#248814">Public subnet</text><text x="1018" y="456" fill="#248814">Public subnet</text>
              <text x="850" y="583" fill="#147eba">Private subnet</text><text x="1018" y="583" fill="#147eba">Private subnet</text>
            </g>
            <g class="label mid" fill="#232f3e">
              <text x="883" y="420" fill="#147eba">ap-northeast-1a</text><text x="1051" y="420" fill="#147eba">ap-northeast-1c</text>
              <text x="967" y="290">Internet</text><text x="1034" y="291">client</text>
              <text x="884" y="397">S3</text>
              <text x="884" y="512">EC2</text><text x="883" y="519">raisetech-5-app-server</text>
              <text x="967" y="512">ELB</text><text x="883" y="639">RDS</text><text x="883" y="646">database-1</text>
            </g>
            <g class="note mid"><text x="841" y="373">S3</text><text x="841" y="382">に画像を保</text><text x="841" y="391">存</text></g>
            <path d="M867 357h33v33h-33z" fill="#7aa116"/>
            <g fill="none" stroke="#fff" stroke-width="1.200"><ellipse cx="883" cy="364" rx="12" ry="3"/><path d="m871 364 4 20q8 5 16 0l4-20M883 372q10 5 12 4t-3-5"/></g><circle cx="883" cy="372" r="1" fill="#fff"/>
            <path d="M950 470h33v33h-33z" fill="#8c4fff"/>
            <g fill="none" stroke="#fff" stroke-width="1.400"><circle cx="961" cy="487" r="7"/><circle cx="975" cy="477" r="3"/><circle cx="977" cy="487" r="3"/><circle cx="975" cy="497" r="3"/><path d="m967 482 6-4m-5 9h6m-7 4 6 4"/></g>
            <use href="#ec2" x="867" y="470" width="33" height="33"/>
            <use href="#rds" x="866" y="597" width="33" height="33"/>
            <circle cx="967" cy="337.500" r="16" fill="#fff" stroke="#8c4fff" stroke-width="1.300"/>
            <path d="M951 339.500h32" stroke="#b592f8"/>
            <path d="M959 347v-12q0-6 8-6t8 6v12h-4v-10q0-4-4-4t-4 4v10z" fill="none" stroke="#8c4fff" stroke-width="1.200"/>
            <path d="M961 273h-3c-5-1-6-7-1-9 1-6 9-9 13-3 4-1 6 1 6 4 5 1 6 8 0 8h-3M963 273v-9m-3 3 3-3 3 3m4-3v9m-3-3 3 3 3-3" fill="none" stroke="#232f3e" stroke-width="1.300"/>
            <g fill="none" stroke="#232f3e" stroke-width="1.500"><rect x="1018" y="251" width="31" height="21" rx="1"/><path d="M1021 254h25v15h-25z"/><rect x="1018" y="275" width="31" height="6" rx="1"/><path d="M1038 278h9" stroke-width="2"/></g>
            <g fill="none" stroke="#666"><path d="M1018 266.500 985 267" marker-end="url(#arrow)"/><path d="M967.500 282v39" marker-end="url(#arrow)"/><path d="M967.500 354l-.5 116" marker-end="url(#arrow)"/><path d="M950 487.500h-49" marker-end="url(#arrow)"/><path d="M883.500 470v-79" marker-end="url(#arrow)"/><path d="M883.500 503v94" marker-end="url(#arrow)"/></g>
          </svg>
        </div>
      </div>
      <div class="page-tabs">
        <button aria-label="ページ一覧"><svg width="4" height="10" viewBox="0 0 4 10" fill="#555"><circle cx="2" cy="1.500" r="1"/><circle cx="2" cy="5" r="1"/><circle cx="2" cy="8.500" r="1"/></svg></button>
        <a class="page-tab" href="#">ページ1<svg width="5" height="3" viewBox="0 0 5 3"><path d="m.5 2.500 2-2 2 2" fill="none" stroke="#777"/></svg></a>
        <button aria-label="ページを追加"><svg width="9" height="9" viewBox="0 0 9 9"><path d="M4.500 0v9M0 4.500h9" stroke="#555"/></svg></button>
      </div>
    </section>

    <aside class="format">
      <div class="format-tabs"><a class="current" href="#">ダイアグラム</a><a href="#">スタイル</a><button aria-label="閉じる"><svg width="5" height="5" viewBox="0 0 5 5"><path d="m0 0 5 5m0-5L0 5" stroke="#a9bcdc"/></svg></button></div>
      <section class="view">
        <h2>表示</h2>
        <div class="opt"><label><input type="checkbox">グリッド</label></div>
        <div class="opt"><label><input type="checkbox" checked>ページビュー</label></div>
        <div class="opt split"><span class="indent">背景</span><button class="btn">変更する...</button></div>
        <div class="opt"><label><input type="checkbox">背景色</label></div>
        <div class="opt split"><label><input type="checkbox">影付き</label><label><input type="checkbox">スケッチ</label></div>
      </section>
      <section>
        <h2>オプション</h2>
        <div class="opt"><label><input type="checkbox" checked>接続矢印</label></div>
        <div class="opt"><label><input type="checkbox" checked>接続ポイント</label></div>
        <div class="opt"><label><input type="checkbox" checked>ガイド</label></div>
      </section>
      <section class="paper">
        <h2><label for="paper">用紙サイズ</label></h2>
        <div class="select-wrap"><select id="paper"><option>A4 (210 mm x 297 mm)</option></select></div>
        <div class="opt radios"><label><input type="radio" name="orient" checked>縦向き</label><label><input type="radio" name="orient">横向き</label></div>
      </section>
      <section class="actions">
        <button class="btn">データを編集...</button>
        <button class="btn">デフォルトスタイルをクリア</button>
      </section>
    </aside>
  </div>
</main>

<footer class="shelf">
  <button class="round launcher" aria-label="ランチャー"><svg width="20" height="20" viewBox="0 0 20 20"><circle cx="10" cy="10" r="9" fill="none" stroke="#77797e" stroke-width="2"/><circle cx="10" cy="10" r="7" fill="#1b1d21"/></svg></button>
  <nav class="dock">
    <a class="app-icon on" href="#" aria-label="Gmail"><svg viewBox="0 0 42 42"><use href="#gmail" x="6" y="9" width="30" height="23"/></svg></a>
    <a class="app-icon" href="#" aria-label="カレンダー"><svg viewBox="0 0 42 42"><path d="M8 8h26v26H8z" fill="#4285f4"/><path d="M28 8h6v6h-6z" fill="#1967d2"/><path d="M28 14h6v14h-6z" fill="#fbbc04"/><path d="M8 28h20v6H8z" fill="#34a853"/><path d="M8 28h6v6H8z" fill="#188038"/><path d="M28 28h6v6h-6z" fill="#fff"/><path d="M28 28h6l-6 6z" fill="#ea4335"/><path d="M14 14h14v14H14z" fill="#fff"/><text x="21" y="25" text-anchor="middle" font-size="11" font-weight="bold" fill="#1a73e8">31</text></svg></a>
    <a class="app-icon on blue" href="#" aria-label="ファイル"><svg viewBox="0 0 42 42"><path d="M8 12q0-2 2-2h8l3 3h11q2 0 2 2v5H8z" fill="#fff"/><rect x="8" y="14" width="26" height="17" rx="2" fill="#7df8f5"/></svg></a>
    <a class="app-icon" href="#" aria-label="メッセージ"><svg viewBox="0 0 42 42"><rect x="8" y="9" width="22" height="15" rx="7" fill="#8ab0fb"/><path d="M15 13h13q6 1 6 7t-6 8h-6v7l-8-7q-5-2-5-8t6-7z" fill="#4d88f8"/><rect x="10" y="12" width="22" height="13" rx="6" fill="#0b57d0"/></svg></a>
    <a class="app-icon" href="#" aria-label="Meet"><svg viewBox="0 0 42 42"><path d="M7 16h7v12H7z" fill="#2684fc"/><path d="m7 16 7-7v7z" fill="#ea4335"/><path d="M14 10h14q2 0 2 2v9h-7v-5h-9z" fill="#fbbc04"/><path d="M14 26h9v-5h7v10q0 2-2 2H14z" fill="#34a853"/><path d="M7 26h7v7H9q-2 0-2-2z" fill="#1967d2"/><path d="m24 21 9-8q2-1 2 1v15q0 2-2 0z" fill="#188038"/></svg></a>
    <a class="app-icon on" href="#" aria-label="Play"><svg viewBox="0 0 42 42"><path d="M12 10v23l11-12z" fill="#4285f4"/><path d="m12 9 17 9-6 4z" fill="#34a853"/><path d="m29 17 5 3q1 1 0 2l-5 4-6-5z" fill="#fbbc04"/><path d="m12 34 17-9-6-5z" fill="#ea4335"/><circle cx="37" cy="7" r="5" fill="#f8d260"/></svg></a>
    <a class="app-icon" href="#" aria-label="フォト"><svg viewBox="0 0 42 42"><path d="M21 7q7 1 7 7t-7 7z" fill="#ea4335"/><path d="M35 21q-1 7-7 7t-7-7z" fill="#4285f4"/><path d="M21 35q-7-1-7-7t7-7z" fill="#34a853"/><path d="M7 21q1-7 7-7t7 7z" fill="#fbbc04"/></svg></a>
    <a class="app-icon on" href="#" aria-label="Brave"><svg viewBox="0 0 42 42"><use href="#brave" x="7" y="6" width="28" height="32"/><circle cx="37" cy="7" r="5" fill="#ff9780"/></svg></a>
    <a class="app-icon on discord" href="#" aria-label="Discord"><svg viewBox="0 0 42 42"><path transform="translate(7 7) scale(1.150)" fill="#fff" d="M20.317 4.370a19.790 19.790 0 00-4.885-1.515.074.074 0 00-.079.037c-.211.375-.445.865-.608 1.250-1.845-.276-3.680-.276-5.487 0-.164-.393-.406-.874-.618-1.250a.077.077 0 00-.079-.037 19.736 19.736 0 00-4.885 1.515.070.070 0 00-.032.028C.533 9.046-.319 13.580.099 18.058a.082.082 0 00.031.056c2.053 1.508 4.041 2.423 5.993 3.029a.078.078 0 00.084-.028c.462-.630.873-1.295 1.226-1.994a.076.076 0 00-.042-.106c-.653-.248-1.274-.550-1.872-.892a.077.077 0 01-.008-.128c.126-.094.252-.192.372-.291a.074.074 0 01.078-.011c3.928 1.793 8.180 1.793 12.061 0a.074.074 0 01.079.010c.120.099.246.198.373.292a.077.077 0 01-.007.128 12.299 12.299 0 01-1.873.891.077.077 0 00-.041.107c.360.698.772 1.363 1.225 1.993a.076.076 0 00.084.029c1.961-.607 3.950-1.522 6.002-3.029a.077.077 0 00.031-.055c.500-5.177-.838-9.674-3.549-13.660a.061.061 0 00-.031-.029zM8.020 15.331c-1.183 0-2.157-1.086-2.157-2.419s.956-2.419 2.157-2.419c1.211 0 2.176 1.095 2.157 2.419 0 1.333-.956 2.419-2.157 2.419zm7.975 0c-1.183 0-2.157-1.086-2.157-2.419s.955-2.419 2.157-2.419c1.211 0 2.176 1.095 2.157 2.419 0 1.333-.946 2.419-2.157 2.419z"/><circle cx="37" cy="7" r="5" fill="#7a80fa"/></svg></a>
    <a class="app-icon on dark" href="#" aria-label="ターミナル"><svg viewBox="0 0 42 42"><path d="m8 14 10 6-10 6" fill="none" stroke="#7ef5c4" stroke-width="3"/><path d="M21 31h11" stroke="#fff" stroke-width="3"/></svg></a>
    <a class="app-icon on dark" href="#" aria-label="テキスト"><svg viewBox="0 0 42 42"><path d="m13 16-8 5 8 5m16-10 8 5-8 5" fill="none" stroke="#fff" stroke-width="3"/><path d="M21 12v14q0 4 5 3M16 17h9" fill="none" stroke="#7ef5c4" stroke-width="3"/></svg></a>
    <a class="app-icon on current" href="#" aria-label="Chrome"><svg viewBox="0 0 42 42"><circle cx="21" cy="21" r="21" fill="#34a853"/><path d="M21 42A21 21 0 0 0 39.200 10.500H21l9 15.700z" fill="#fbc934"/><path d="M2.800 10.500A21 21 0 0 1 39.200 10.500H21l-9 15.700z" fill="#ea4335"/><circle cx="21" cy="21" r="10.500" fill="#fff"/><circle cx="21" cy="21" r="8.500" fill="#1a73e8"/></svg></a>
    <a class="app-icon line" href="#" aria-label="LINE"><svg viewBox="0 0 42 42"><path d="M21 7c9 0 15 5 15 12 0 6-8 11-14 16-1 0 0-3-1-4C12 31 6 26 6 19S12 7 21 7z" fill="#fff"/><text x="21" y="23" text-anchor="middle" font-size="9" font-weight="bold" fill="#4cc764">LINE</text></svg></a>
    <i class="dock-sep"></i>
    <a class="app-icon on" href="#" aria-label="VS Code"><svg viewBox="0 0 42 42"><path d="m28 7-20 18q-1 1 0 2l2 1 18-14z" fill="#0076bd"/><path d="m28 35L8 18q-1-1 0-2l2-1 18 14z" fill="#1a8ad4"/><path d="m27 7 8 4v20l-8 4q1 0 1-2V9z" fill="#28a6ee"/></svg></a>
    <a class="app-icon on" href="#" aria-label="YouTube"><svg viewBox="0 0 42 42"><rect x="5" y="10" width="33" height="23" rx="5" fill="#f00"/><path d="m18 16 8 5-8 5z" fill="#fff"/></svg></a>
    <a class="app-icon on magenta" href="#" aria-label="ギャラリー"><svg viewBox="0 0 42 42"><path d="M11 9h22v22l-22 3z" fill="#f3a5d8"/><path d="m10 11 22-2 2 22-21 2z" fill="#fff"/><path d="m26 11 1.500 4 4 1.500-4 1.500-1.500 4-1.500-4-4-1.500 4-1.500zM20 16l1 3 3 1-3 1-1 3-1-3-3-1 3-1zM26 21l1 2 2 1-2 1-1 2-1-2-2-1 2-1z" fill="#c21ad6"/></svg></a>
    <a class="app-icon on dark" href="#" aria-label="設定"><svg viewBox="0 0 42 42"><path transform="translate(3 3) scale(1.500)" d="M19.140 12.940c.04-.3.06-.61.06-.94 0-.32-.02-.64-.07-.94l2.030-1.580c.18-.14.23-.41.12-.61l-1.920-3.320c-.12-.22-.37-.29-.59-.22l-2.390.96c-.5-.38-1.030-.7-1.620-.94l-.36-2.540c-.04-.24-.24-.41-.48-.41h-3.840c-.24 0-.43.17-.47.41l-.36 2.540c-.59.24-1.130.57-1.620.94l-2.390-.96c-.22-.08-.47 0-.59.22L2.740 8.870c-.12.21-.08.47.12.61l2.030 1.580c-.05.3-.09.63-.09.94s.02.64.07.94l-2.030 1.580c-.18.14-.23.41-.12.61l1.920 3.320c.12.22.37.29.59.22l2.390-.96c.5.38 1.030.7 1.620.94l.36 2.540c.05.24.24.41.48.41h3.840c.24 0 .44-.17.47-.41l.36-2.540c.59-.24 1.130-.56 1.620-.94l2.390.96c.22.08.47 0 .59-.22l1.920-3.320c.12-.22.07-.47-.12-.61z" fill="#fff"/><circle cx="21" cy="21" r="8" fill="#4285f4"/><circle cx="21" cy="21" r="5" fill="#5f6368"/></svg></a>
  </nav>
  <div class="status">
    <button class="round" aria-label="ダウンロード"><svg width="24" height="24" viewBox="0 0 24 24" fill="none" stroke="#1b1d21" stroke-width="2"><rect x="6" y="1" width="16" height="16" rx="2"/><path d="M14 5v8m-3-3 3 3 3-3M3 6 2 21q0 2 2 2l14-2"/></svg></button>
    <button class="round lang">JA</button>
    <div class="pills">
      <button class="pill count"><b>9</b></button>
      <button class="pill date">6月24日</button>
      <button class="pill time">15:59<svg width="20" height="16" viewBox="0 0 20 16"><path d="M0 4q10-8 20 0L10 16z" fill="#1b1d21"/></svg><svg width="11" height="18" viewBox="0 0 11 18"><path d="M1 3h9v14H1z" fill="none" stroke="#1b1d21" stroke-width="2"/><path d="M3 0h5v3H3zM1 12h9v5H1z" fill="#1b1d21"/></svg></button>
    </div>
  </div>
</footer>
</body>
</html>
```
FILE: styles.css
```css
* { box-sizing: border-box; }
body {
  margin: 0;
  min-height: 100vh;
  display: flex;
  flex-direction: column;
  font-family: Roboto, "Noto Sans CJK JP", sans-serif;
  color: #44474c;
  background: #f1f2f4;
}
a { color: inherit; text-decoration: none; }
button, input, select { font: inherit; color: inherit; margin: 0; }
button { padding: 0; border: 0; background: none; }
svg { display: block; flex: none; }
.defs { position: absolute; width: 0; height: 0; }
.spacer { flex: 1; }
.icon-btn { display: flex; align-items: center; justify-content: center; }
.sep { width: 2px; height: 24px; background: #cfe0fb; }

/* Browser chrome */
.browser { background: #d6e2f9; }
.tabstrip { display: flex; height: 50px; padding-left: 8px; }
.tab-search {
  width: 34px; height: 34px; margin-top: 8px;
  border-radius: 12px; background: #e9f0fe;
  display: flex; align-items: center; justify-content: center;
}
.tabs { flex: 1; display: flex; margin-left: 6px; }
.tab {
  flex: 1 1 0; min-width: 0;
  display: flex; align-items: center;
  padding: 0 0 0 12px;
  background: linear-gradient(#a3c9fe, #a3c9fe) right 1px center / 2px 20px no-repeat;
}
.tab svg { width: 20px; height: 20px; }
.tab span {
  width: 32px; margin-left: 10px; overflow: hidden; white-space: nowrap;
  font-size: 16px;
  mask-image: linear-gradient(to right, #000 50%, transparent);
}
.tab.plain, .tab.active { background: none; }
.tab.active {
  flex-grow: .88;
  margin: 8px 0 0 4px; padding: 0 0 8px 10px;
  background: #f8f9ff; border-radius: 12px 12px 0 0;
}
.tab .tab-close { width: 10px; height: 10px; margin-left: 24px; }
.new-tab { width: 42px; }
.window-controls { display: flex; gap: 26px; padding: 14px 13px 0 76px; align-items: flex-start; }
.navbar {
  display: flex; align-items: center; height: 58px; padding-right: 5px;
  background: #f8f9ff; border-radius: 12px 12px 0 0;
}
.nav-buttons { display: flex; padding-left: 5px; width: 195px; }
.nav-buttons .icon-btn { width: 45px; }
.omnibox {
  flex: 1; display: flex; align-items: center; height: 42px;
  padding: 0 9px 0 5px; border-radius: 21px; background: #e6e9f2;
}
.omnibox .icon-btn { width: 40px; }
.site-info {
  width: 32px; height: 32px; border-radius: 50%; background: #f8f9ff;
  display: flex; align-items: center; justify-content: center;
}
.url {
  flex: 1; min-width: 0; margin-left: 9px; padding: 0; border: 0; background: none;
  font-size: 18px; color: #202124;
}
.extensions { display: flex; align-items: center; padding-left: 10px; }
.extensions .icon-btn { width: 46px; }
.extensions .sep { margin: 0 8px 0 9px; }
.bookmarks {
  display: flex; align-items: center; gap: 23px; height: 44px;
  padding: 0 18px 6px 16px; background: #f8f9ff;
  font-size: 16px; white-space: nowrap;
}
.bookmarks a { display: flex; align-items: center; gap: 7px; }
.bookmarks .dir { gap: 10px; }
.bookmarks a svg { width: 20px; height: 20px; }

/* Editor */
.app {
  flex: 1; display: flex; flex-direction: column;
  border-top: 1px solid #d8dcec;
  font-family: "Liberation Sans", "Noto Sans CJK JP", sans-serif;
  font-size: 7px; color: #333;
}
.app-header {
  display: flex; height: 36px; padding: 7px 0 0 9px;
  border-bottom: 1px solid #dadce0;
}
.logo { width: 17px; height: 20px; }
.titles { margin-left: 10px; }
h1 { margin: 0; font-size: 9px; line-height: 12px; font-weight: 500; }
.menus { display: flex; align-items: center; gap: 9px; height: 14px; }
.menus a + a { padding-left: 0; }
.unsaved {
  display: flex; align-items: center; justify-content: space-between; width: 191px; height: 15px; padding: 0 6px 0 5px;
  border: 1px solid #e5a3a8; border-radius: 1px; background: #efc9cb; color: #b93a40; font-size: 6px;
}
.header-right { margin-left: auto; display: flex; flex-direction: column; align-items: flex-end; padding-right: 5px; margin-top: -5px; }
.share {
  display: flex; align-items: center; justify-content: center; gap: 2px;
  width: 37px; height: 16px; margin: 3px 14px 0 0; border-radius: 1px; background: #f49422; color: #111;
}
.toolbar {
  display: flex; align-items: center; gap: 4px; height: 19px; padding: 0 9px 0 2px;
  border-bottom: 1px solid #dadce0;
}
.tool-group { display: flex; align-items: center; justify-content: space-around; width: 37px; height: 10px; border-right: 1px solid #d8d9db; }
.tool-group.single { width: 20px; }
.tool-group.triple { width: 53px; }
.tool-group.quad { width: 52px; }
.tool-group.pair, .tool-group.last { width: 26px; }
.tool-group.last, .tool-group.first { border: 0; }
.tool-group.first { width: 27px; padding-left: 9px; }
.tool-group.zoom-level { width: 45px; padding: 0 5px 0 10px; }
.caret { width: 5px; height: 3px; }
.workspace { flex: 1; display: flex; }

.shapes { width: 113px; padding-top: 7px; }
.search {
  display: flex; align-items: center; width: 104px; height: 16px; margin-left: 4px; padding: 0 3px 2px 4px;
  border: 1px solid #d8dadd; border-radius: 1px; background: #fff;
}
.search input { flex: 1; min-width: 0; border: 0; padding: 0; font-size: 7px; background: none; }
.palette {
  display: grid; grid-template-columns: repeat(5, 15px); gap: 3px 4px;
  padding: 6px 0 5px 6px;
}
.palette svg { width: 16px; height: 15px; }
.letter { font: bold 10px "Liberation Sans", sans-serif; fill: #fff; text-anchor: middle; }
.more-results {
  display: block; width: 53px; height: 18px; margin: 0 0 6px 30px;
  border: 1px solid #d5d6d8; border-radius: 1px; background: #ededee; font-size: 6px;
}
.shapes hr { margin: 0; border: 0; height: 2px; background: #d8dade; }
.more-shapes { display: block; width: 62px; height: 15px; margin: 6px 0 0 26px; border-radius: 1px; background: #4a8af4; color: #fff; }
.more-shapes b { font-weight: 400; }

.stage { flex: 1; min-width: 0; display: flex; flex-direction: column; border-left: 1px solid #d5d7db; }
.ruler-top { display: flex; justify-content: center; height: 8px; padding-left: 27px; background: #e6e8ec; border-bottom: 1px solid #d5d7db; overflow: hidden; }
.ruler-page {
  display: grid; grid-template-columns: repeat(9, 53px); width: 443px; overflow: hidden;
  background: repeating-linear-gradient(to right, transparent 0 52px, #ccc 52px 53px), #fff;
  font-size: 5px; line-height: 8px; color: #aaa;
}
.stage-body { flex: 1; display: flex; }
.ruler-left {
  display: grid; grid-template-rows: repeat(14, 1fr) 28px;
  width: 8px; padding-top: 11px; border-right: 1px solid #d5d7db; overflow: hidden;
  background: repeating-linear-gradient(transparent 0 4px, #d8d8d8 4px 5px) right / 2px 100% no-repeat, #fff;
  font-size: 5px; line-height: 7px; color: #aaa;
}
.ruler-left span { writing-mode: vertical-rl; transform: rotate(180deg); justify-self: center; text-align: end; }
.canvas { flex: 1; display: flex; justify-content: center; align-items: flex-start; padding-left: 20px; background: #fbfbfb; }
.label { font: 6px "Liberation Sans", sans-serif; }
.note { font: 7px "Liberation Sans", "Noto Sans CJK JP", sans-serif; }
.logo-word { font: bold 4px "Liberation Sans", sans-serif; fill: #fff; }
.mid { text-anchor: middle; }
.page-tabs { display: flex; height: 19px; border-top: 1px solid #d5d7db; }
.page-tabs button { width: 16px; display: flex; align-items: center; justify-content: center; }
.page-tab {
  display: flex; align-items: center; justify-content: center; gap: 4px; width: 43px;
  border: solid #d5d7db; border-width: 0 1px; background: #fff; font-size: 6px;
}

.format { width: 128px; border-left: 1px solid #d5d7db; font-size: 6px; line-height: 8px; color: #777; }
.format-tabs { display: flex; height: 19px; font-size: 7px; font-weight: 500; color: #444; }
.format-tabs a, .format-tabs button {
  flex: 1; display: flex; align-items: center; justify-content: center;
  background: #e3e3e4; border: solid #d5d7db; border-width: 0 0 1px 1px;
}
.format-tabs .current { background: none; border: 0; }
.format-tabs button { flex: 0 0 15px; }
.format section { padding: 6px 8px 4px 7px; border-bottom: 1px solid #d5d7db; }
.format h2 { margin: 0; height: 12px; padding-top: 1px; font-size: 6px; line-height: 8px; font-weight: 500; color: #444; }
.format .opt { display: flex; align-items: center; height: 13px; }
.format .view { padding: 7px 8px 6px 7px; }
.format .view h2 { height: 14px; }
.format .view .opt { height: 12px; }
.format .paper { padding-bottom: 6px; }
.format label { display: inline-flex; align-items: center; }
.format input { width: 7px; height: 7px; margin: 0 3px 0 0; accent-color: #0a75f0; }
.indent { padding-left: 10px; }
.split > :first-child { width: 55px; }
.split .btn { width: 58px; margin-left: -2px; }
.btn { height: 12px; border: 1px solid #ccced1; border-radius: 1px; background: #eeeeef; color: #222; font-weight: 500; line-height: 8px; }
.format select {
  display: block; width: 109px; height: 12px; padding: 0 3px; font-size: 6px; line-height: 8px;
  appearance: none; border: 1px solid #ccced1; border-radius: 1px; color: #222;
  background: #eeeeef;
}
.select-wrap { position: relative; width: 109px; }
.select-wrap::after {
  content: ""; position: absolute; right: 5px; top: 1px; width: 6px; height: 6px;
  border: solid #111; border-width: 0 2px 2px 0; transform: rotate(45deg);
}
.radios { gap: 5px; padding-left: 5px; }
.format .actions { display: flex; flex-direction: column; gap: 2px; padding: 6px 7px; }

/* Shelf */
.shelf {
  display: flex; align-items: center; height: 60px; padding: 0 7px 2px 8px;
  background: #dfe2ec; border-top: 1px solid #c8ccd8; color: #1b1d21;
}
.round {
  width: 45px; height: 45px; border-radius: 50%; background: #f1f1f9;
  display: flex; align-items: center; justify-content: center;
}
.dock { display: flex; align-items: center; gap: 28px; margin-left: 262px; }
.app-icon { position: relative; width: 42px; height: 42px; border-radius: 50%; background: #fff; box-shadow: 0 1px 2px #0005; }
.app-icon svg { width: 42px; height: 42px; }
.app-icon.on::after {
  content: ""; position: absolute; left: 16px; bottom: -8px; width: 10px; height: 3px; border-radius: 1px; background: #5f6b82;
}
.app-icon.current::after { left: 13px; width: 17px; background: #1b1d21; }
.blue { background: #1a73e8; }
.discord { background: #5865f2; }
.dark { background: #5f6368; }
.line { background: #4cc764; }
.magenta { background: #c21ad6; }
.dock-sep { width: 1px; height: 25px; margin: 0 -14px 0 -15px; background: #c4c8d4; }
.status { display: flex; gap: 10px; align-items: center; margin-left: auto; font-size: 18px; }
.pills { display: flex; gap: 5px; }
.pill { height: 46px; border-radius: 4px; background: #f1f1f9; display: flex; align-items: center; justify-content: center; }
.count { width: 53px; border-radius: 23px 4px 4px 23px; }
.count b { width: 20px; height: 20px; border-radius: 50%; background: #1b1d21; color: #f1f1f9; font-size: 14px; line-height: 20px; }
.date { width: 101px; }
.time { width: 133px; gap: 11px; border-radius: 4px 23px 23px 4px; }
```
